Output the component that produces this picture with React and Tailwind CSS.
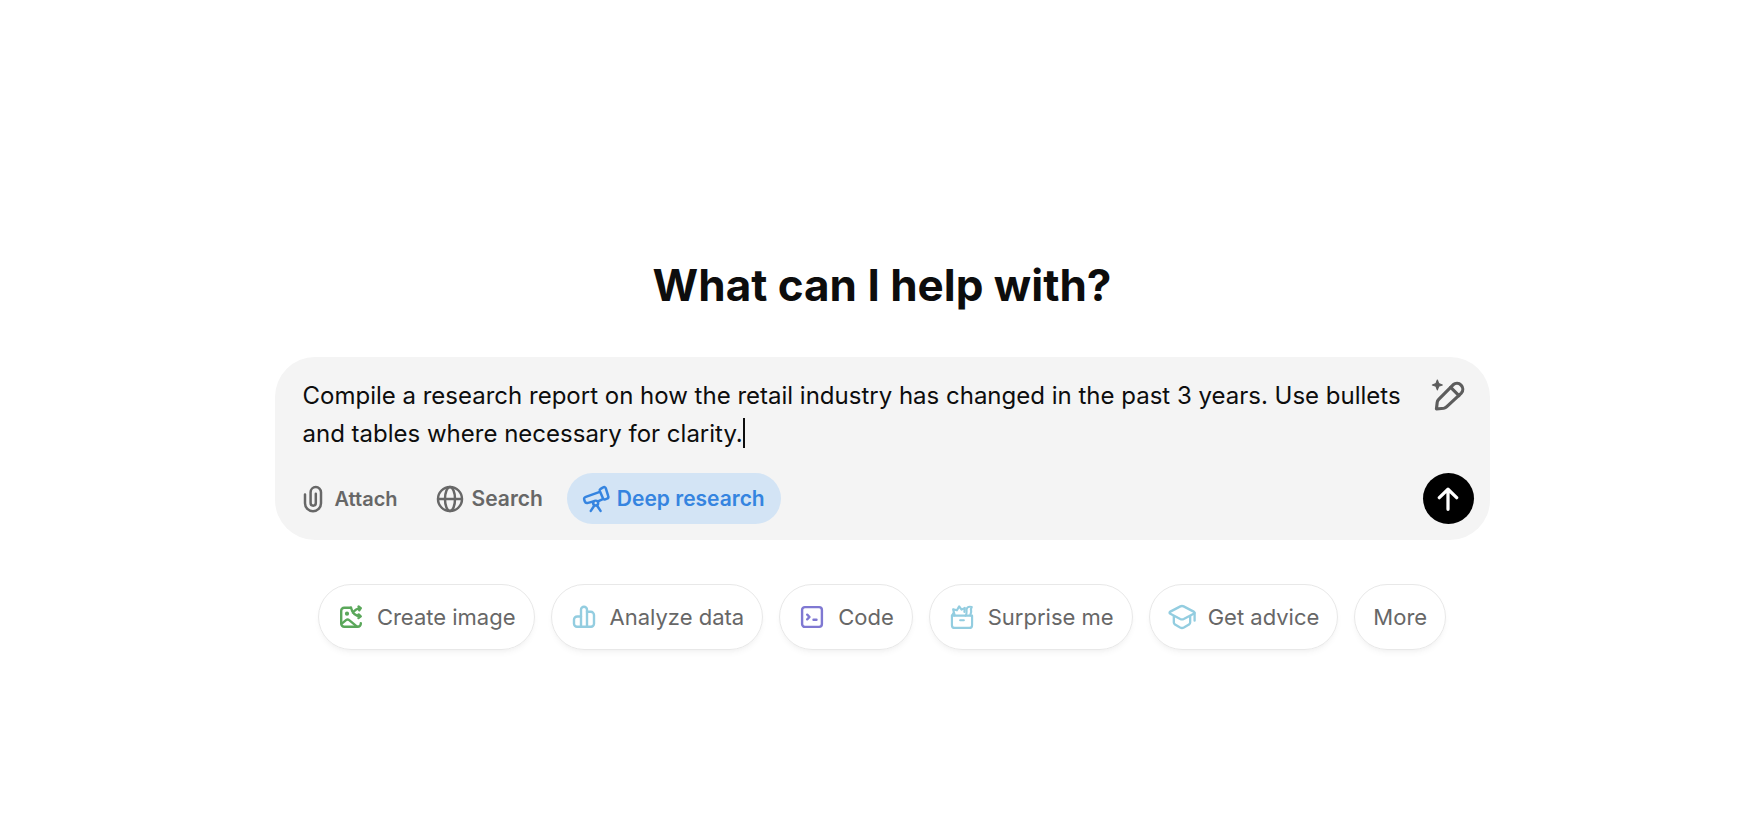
import React, { useState } from 'react';
import clsx from 'clsx';

const DEFAULT_PROMPT =
    'Compile a research report on how the retail industry has changed in the past 3 years. Use bullets and tables where necessary for clarity.';

const Icon = ({ className, strokeWidth = 2.4, viewBox = '0 0 24 24', children }) => (
    <svg
        className={clsx('shrink-0', className)}
        viewBox={viewBox}
        fill="none"
        stroke="currentColor"
        strokeWidth={strokeWidth}
        strokeLinecap="round"
        strokeLinejoin="round"
        aria-hidden="true"
    >
        {children}
    </svg>
);

const PaperclipIcon = () => (
    <Icon className="w-5 h-7" viewBox="0 0 20 28" strokeWidth={2.5}>
        <path d="M2 9.500v8.800a8 8 0 0 0 16 0V7.300a5.200 5.200 0 0 0-10.400 0v10.800a2.600 2.600 0 0 0 5.200 0V8.800" />
    </Icon>
);

const GlobeIcon = () => (
    <Icon className="w-7 h-7" strokeWidth={2.1}>
        <circle cx="12" cy="12" r="10.300" />
        <ellipse cx="12" cy="12" rx="4.300" ry="10.300" />
        <path d="M2 12h20" />
    </Icon>
);

const TelescopeIcon = () => (
    <Icon className="w-[26px] h-[26px] overflow-visible" strokeWidth={2.3}>
        <path d="M16.300 2.600l2.300-1.300c1-.6 2-.3 2.400.7l2.300 7.400c.4 1.100-.1 1.900-1.100 2.300l-1.600.6c-1 .4-1.800 0-2.200-1l-2.900-6.700c-.3-.9-.1-1.500.800-2z" />
        <path d="M15.500 5.400L2.600 10c-1.400.5-1.900 1.500-1.400 2.800l.5 1.500c.5 1.300 1.500 1.700 2.900 1.300l5-1.300M13.800 14.200l4-1.900" />
        <circle cx="11.700" cy="15.800" r="2.300" />
        <path d="M10.500 18L7.200 23M12.900 18l3.300 5" />
    </Icon>
);

const MagicPencilIcon = () => (
    <Icon className="w-9 h-9" strokeWidth={2.1}>
        <path d="M4.300 21.300l.5-4.400c.1-.8.4-1.400 1-2L15.400 5.200a3.900 3.900 0 0 1 5.500 5.500L11.200 19.800c-.6.6-1.200.9-2 1z" />
        <path d="M13.800 6.900l5.500 5.500" />
        <path d="M4.900 2l.9 2.400 2.400.9-2.400.9-.9 2.400-.9-2.400-2.400-.9 2.400-.9z" fill="currentColor" strokeWidth="0.8" />
    </Icon>
);

const ArrowUpIcon = () => (
    <Icon className="w-[26px] h-[26px]" strokeWidth={3}>
        <path d="M12 21.500V3M4 10.800L12 3l8 7.800" />
    </Icon>
);

const ImageIcon = () => (
    <Icon className="w-6 h-6">
        <path d="M12 2.700H5.200a3 3 0 0 0-3 3v13.100a3 3 0 0 0 3 3h13.600a3 3 0 0 0 3-3v-.600" />
        <path d="M2.800 18.600l4.200-3.500c1.100-.9 2.200-.9 3.200 0l7.800 6.500" />
        <circle cx="8" cy="8.700" r="0.900" fill="currentColor" />
        <path d="M12 2.700c1.200 5 3.700 8.300 9.300 8.600M14 7.800c2-3.400 4-4.500 7.500-4.600M19.600 1.500l2.200 1.600-1.500 2.100M19.700 9.400l2 1.900-2.200 1.700" />
    </Icon>
);

const ChartIcon = () => (
    <Icon className="w-6 h-6">
        <path d="M9 21.800V4.800a3 3 0 0 1 6 0v17" />
        <path d="M9 11.500H5.200A3.200 3.200 0 0 0 2 14.700v4.100a3 3 0 0 0 3 3h14a3 3 0 0 0 3-3V10a3.200 3.200 0 0 0-3.200-3.200H15" />
    </Icon>
);

const CodeIcon = () => (
    <Icon className="w-6 h-6">
        <rect x="2.100" y="2.100" width="19.800" height="19.800" rx="2.800" />
        <path d="M7.200 9.700l2.300 2.300-2.300 2.300M13.500 14.800h3" />
    </Icon>
);

const GiftIcon = () => (
    <Icon className="w-[26px] h-[26px]" strokeWidth={2}>
        <path d="M2.700 10.800h18.600v8.700a2.600 2.600 0 0 1-2.600 2.600H5.300a2.600 2.600 0 0 1-2.600-2.600z" />
        <path d="M2.700 10.800l1.500-2.400M10.300 15h3.400" />
        <path d="M5.200 10.500L3.800 4.800l3.500 1 2.100-3.600 2.200 3 3-1.600-.4 3.600" />
        <path d="M15.300 10.700c1.800-2.100.4-4.200 1-6.200.6-1.900 2.300-2.300 4.700-1.700-.9 1.200-.9 2.100-.6 3.400.4 1.700-.7 2.400-.6 4.300" />
    </Icon>
);

const CapIcon = () => (
    <Icon className="w-7 h-7" strokeWidth={2}>
        <path d="M10.600 2.900L2 7.400c-.9.500-.9 1.300 0 1.800l8.500 4.500c1 .5 2 .5 3 0L22 9.200c.9-.5.9-1.300 0-1.800l-8.600-4.500c-1-.5-1.800-.5-2.800 0z" />
        <path d="M5 11.300v5.500c0 .8.300 1.200 1 1.700l4.400 2.500c1.200.6 2 .6 3.200 0l4.400-2.500c.7-.5 1-.9 1-1.700v-5.500M22.800 8.500v6.600" />
    </Icon>
);

const SUGGESTIONS = [
    { label: 'Create image', icon: ImageIcon, color: 'text-[#5aa75a]' },
    { label: 'Analyze data', icon: ChartIcon, color: 'text-[#93cde0]' },
    { label: 'Code', icon: CodeIcon, color: 'text-[#7f78d2]' },
    { label: 'Surprise me', icon: GiftIcon, color: 'text-[#93cde0]' },
    { label: 'Get advice', icon: CapIcon, color: 'text-[#93cde0]' },
    { label: 'More' },
];

const Composer = () => {
    const [prompt, setPrompt] = useState(DEFAULT_PROMPT);
    const [deepResearch, setDeepResearch] = useState(true);

    return (
        <form
            className="w-full max-w-[1215px] rounded-[40px] bg-[#f4f4f4] pt-5 pb-4 pl-7 pr-4"
            onSubmit={(e) => e.preventDefault()}
        >
            <div className="flex items-start justify-between">
                <div className="relative flex-1">
                    <textarea
                        aria-label="Message"
                        rows={2}
                        value={prompt}
                        onChange={(e) => setPrompt(e.target.value)}
                        className="block w-full resize-none overflow-hidden bg-transparent text-2xl leading-[38px] text-[#0d0d0d] outline-none"
                    />
                    {/* Text cursor */}
                    {prompt === DEFAULT_PROMPT && (
                        <span className="absolute left-[440px] top-[41px] h-[30px] w-0.5 bg-[#0d0d0d]"></span>
                    )}
                </div>
                <button type="button" aria-label="Improve prompt" className="mr-2 text-[#5d5d5d]">
                    <MagicPencilIcon />
                </button>
            </div>

            <div className="mt-5 flex items-center justify-between">
                <div className="flex items-center text-[21px] font-semibold text-[#676767]">
                    <button type="button" className="flex items-center gap-3 pr-[38px] text-xl">
                        <PaperclipIcon />
                        Attach
                    </button>
                    <button type="button" className="flex items-center gap-2 pr-6">
                        <GlobeIcon />
                        Search
                    </button>
                    <button
                        type="button"
                        aria-pressed={deepResearch}
                        onClick={() => setDeepResearch(!deepResearch)}
                        className={clsx(
                            'flex h-[51px] items-center gap-2 rounded-full px-4',
                            deepResearch && 'bg-[#d3e4f5] text-[#3584e0]'
                        )}
                    >
                        <TelescopeIcon />
                        Deep research
                    </button>
                </div>
                <button
                    type="submit"
                    aria-label="Send"
                    className="flex size-[51px] items-center justify-center rounded-full bg-black text-white"
                >
                    <ArrowUpIcon />
                </button>
            </div>
        </form>
    );
};

const App = () => {
    return (
        <main className="flex min-h-screen flex-col items-center bg-white pt-[257px] pl-1 font-['Inter',sans-serif]">
            <h1 className="text-[44px] leading-[56px] font-bold text-[#0d0d0d]">What can I help with?</h1>

            <div className="mt-11 flex w-full justify-center">
                <Composer />
            </div>

            <div className="mt-11 flex flex-wrap justify-center gap-4">
                {SUGGESTIONS.map(({ label, icon: SuggestionIcon, color }) => (
                    <button
                        key={label}
                        type="button"
                        className="flex h-[66px] items-center gap-3 rounded-full border border-[#e8e8e8] px-[18px] text-[22px] text-[#676767] shadow-md shadow-black/4"
                    >
                        {SuggestionIcon && (
                            <span className={clsx('flex w-7 justify-center', color)}>
                                <SuggestionIcon />
                            </span>
                        )}
                        {label}
                    </button>
                ))}
            </div>
        </main>
    );
};

export default App;
